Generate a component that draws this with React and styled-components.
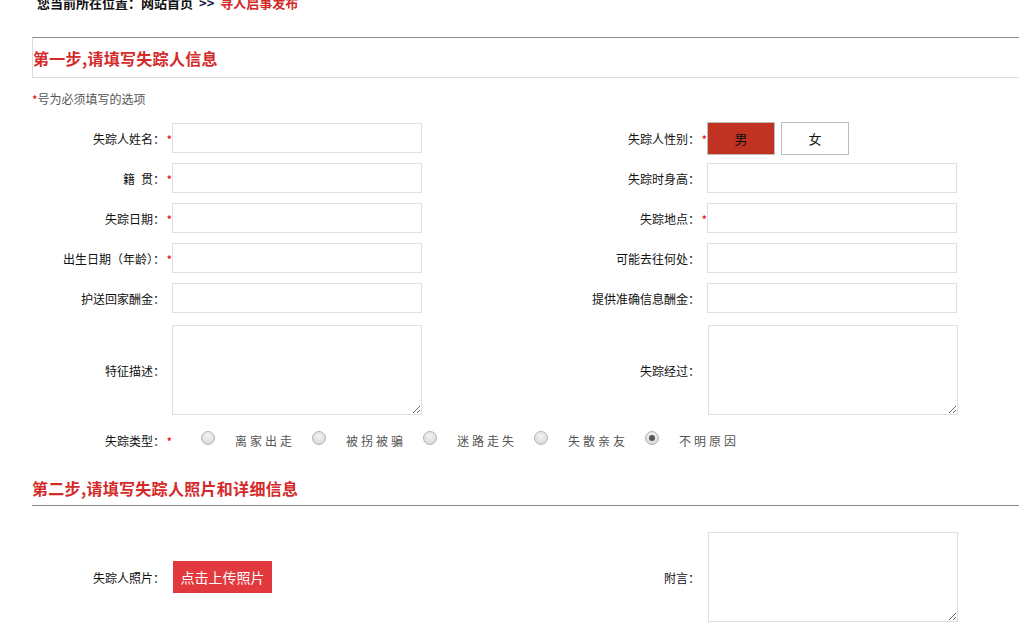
import React from "react";
import styled, { createGlobalStyle } from "styled-components";

const Global = createGlobalStyle`
  html, body { margin: 0; padding: 0; background: #fff; }
  body {
    font-family: "Noto Sans CJK SC", "Liberation Sans", sans-serif;
    font-size: 12px;
    color: #111;
    overflow: hidden;
  }
  * { box-sizing: border-box; }
`;

const Page = styled.div`
  width: 1019px;
  height: 625px;
  overflow: hidden;
  padding-left: 32px;
`;

const Breadcrumb = styled.div`
  margin-top: -7px;
  padding-left: 5px;
  height: 20px;
  line-height: 20px;
  font-size: 13px;
  font-weight: bold;
  color: #111;
  white-space: nowrap;
`;

const Arrow = styled.span`
  color: #1c1c4e;
  margin: 0 6px;
`;

const Current = styled.span`
  color: #d42a2a;
`;

const StepBox = styled.div`
  margin-top: 24px;
  height: 41px;
  border-top: 1px solid #8a8a8a;
  border-left: 1px solid #dcdcdc;
  border-bottom: 1px solid #dcdcdc;
  display: flex;
  align-items: center;
`;

const StepTitle = styled.h2`
  margin: 0;
  font-size: 16px;
  font-weight: bold;
  color: #d42a2a;
  line-height: 24px;
  letter-spacing: 0.3px;
`;

const Note = styled.div`
  margin-top: 14px;
  height: 14px;
  line-height: 14px;
  font-size: 12px;
  color: #555;
`;

const Star = styled.span`
  color: #e00;
  font-size: 12px;
  display: inline-block;
  width: ${(p) => (p.$inline ? "auto" : "7px")};
  text-align: right;
  position: relative;
  top: 1px;
`;

const FormGrid = styled.div`
  display: grid;
  grid-template-columns: 140px 250px 285px 250px;
  grid-template-rows: ${(p) => p.$rows};
  align-items: center;
  margin-top: ${(p) => p.$top || 0}px;
`;

const Label = styled.div`
  display: flex;
  align-items: center;
  justify-content: flex-end;
  padding-right: ${(p) => (p.$req ? "0" : "7px")};
  font-size: 12px;
  color: #111;
  white-space: nowrap;
`;

const TextInput = styled.input`
  width: 250px;
  height: 30px;
  border: 1px solid #e3dfe0;
  background: #fff;
  padding: 0 6px;
  font: inherit;
  outline: none;
`;

const TextArea = styled.textarea`
  width: 250px;
  height: 90px;
  border: 1px solid #e3dfe0;
  background: #fff;
  padding: 4px 6px;
  font: inherit;
  outline: none;
  display: block;
  margin-left: ${(p) => (p.$shift ? "1px" : "0")};
`;

const GenderGroup = styled.div`
  display: flex;
  gap: 6px;
`;

const GenderButton = styled.button`
  width: 68px;
  height: 33px;
  border: 1px solid #bdbdbd;
  background: ${(p) => (p.$active ? "#c03221" : "#fff")};
  color: #111;
  font-family: inherit;
  font-size: 13px;
  padding: 0;
  cursor: pointer;
`;

const RadioGroup = styled.div`
  grid-column: 2 / span 3;
  display: flex;
  align-items: center;
  padding-left: 29px;
`;

const RadioOption = styled.label`
  display: flex;
  align-items: center;
  width: ${(p) => (p.$last ? "auto" : "111px")};
  cursor: pointer;
`;

const Radio = styled.input`
  appearance: none;
  -webkit-appearance: none;
  margin: 0;
  width: 14px;
  height: 14px;
  border-radius: 50%;
  border: 1px solid #b4b4b4;
  background: radial-gradient(circle at 50% 35%, #f4f4f4 0%, #dcdcdc 70%, #cfcfcf 100%);
  position: relative;
  top: -2px;
  flex: none;
  &:checked::after {
    content: "";
    position: absolute;
    left: 3px;
    top: 3px;
    width: 6px;
    height: 6px;
    border-radius: 50%;
    background: #555;
  }
`;

const RadioText = styled.span`
  margin-left: 20px;
  font-size: 12px;
  letter-spacing: 3px;
  color: #555;
`;

const Step2Header = styled.div`
  height: 48px;
  padding-top: 18px;
  border-bottom: 1px solid #8a8a8a;
`;

const UploadButton = styled.button`
  width: 99px;
  height: 32px;
  border: none;
  background: #e2393e;
  color: #fff;
  font-family: inherit;
  font-size: 14px;
  padding: 0;
  margin-left: 1px;
  cursor: pointer;
`;

const Field = ({ label, req }) => (
  <Label $req={req}>
    {label}
    {req && <Star>*</Star>}
  </Label>
);

const types = ["离家出走", "被拐被骗", "迷路走失", "失散亲友", "不明原因"];

export default function App() {
  return (
    <Page>
      <Global />
      <Breadcrumb>
        您当前所在位置：网站首页<Arrow>&gt;&gt;</Arrow>
        <Current>寻人启事发布</Current>
      </Breadcrumb>

      <StepBox>
        <StepTitle>第一步,请填写失踪人信息</StepTitle>
      </StepBox>

      <Note>
        <Star $inline>*</Star>号为必须填写的选项
      </Note>

      <FormGrid $top={12} $rows="40px 40px 40px 40px 40px 104px 36px">
        <Field label="失踪人姓名：" req />
        <TextInput />
        <Field label="失踪人性别：" req />
        <GenderGroup>
          <GenderButton $active>男</GenderButton>
          <GenderButton>女</GenderButton>
        </GenderGroup>

        <Field label={"籍\u2002贯："} req />
        <TextInput />
        <Field label="失踪时身高：" />
        <TextInput />

        <Field label="失踪日期：" req />
        <TextInput />
        <Field label="失踪地点：" req />
        <TextInput />

        <Field label="出生日期（年龄）：" req />
        <TextInput />
        <Field label="可能去往何处：" />
        <TextInput />

        <Field label="护送回家酬金：" />
        <TextInput />
        <Field label="提供准确信息酬金：" />
        <TextInput />

        <Field label="特征描述：" />
        <TextArea />
        <Field label="失踪经过：" />
        <TextArea $shift />

        <Field label="失踪类型：" req />
        <RadioGroup>
          {types.map((t, i) => (
            <RadioOption key={t} $last={i === types.length - 1}>
              <Radio type="radio" name="type" defaultChecked={i === 4} />
              <RadioText>{t}</RadioText>
            </RadioOption>
          ))}
        </RadioGroup>
      </FormGrid>

      <Step2Header>
        <StepTitle>第二步,请填写失踪人照片和详细信息</StepTitle>
      </Step2Header>

      <FormGrid $top={26} $rows="90px">
        <Field label="失踪人照片：" />
        <div>
          <UploadButton>点击上传照片</UploadButton>
        </div>
        <Field label="附言：" />
        <TextArea $shift />
      </FormGrid>
    </Page>
  );
}
